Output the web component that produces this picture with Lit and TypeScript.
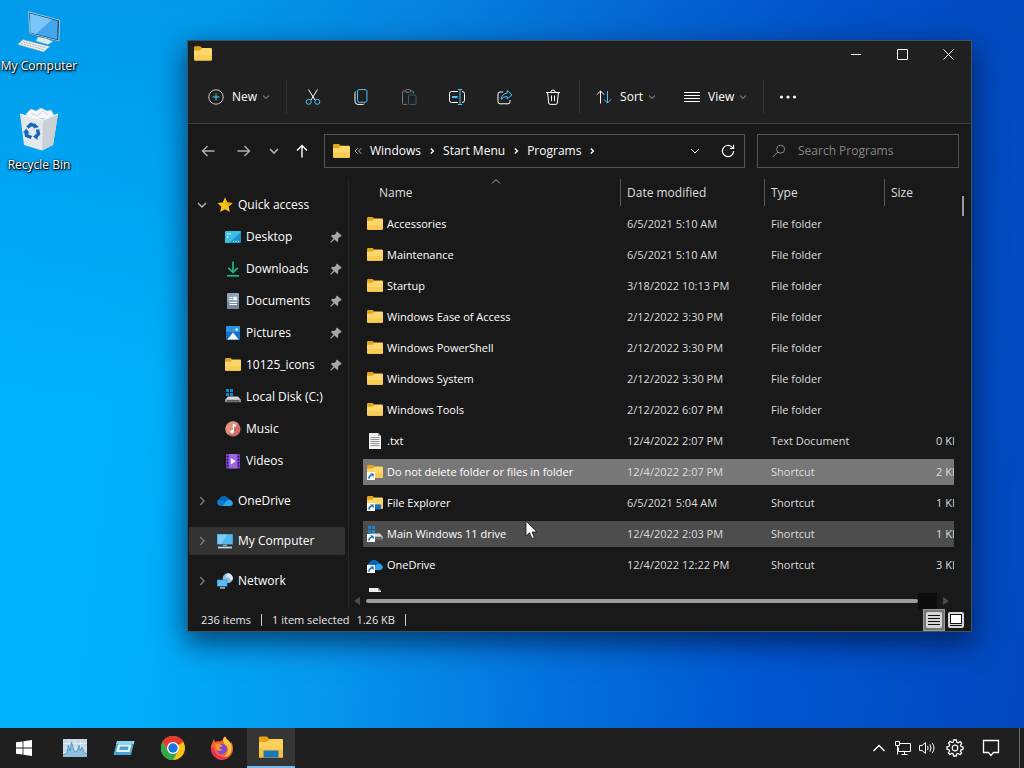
import { LitElement, html, svg, css, nothing } from "lit";
import { customElement, state } from "lit/decorators.js";
import { classMap } from "lit/directives/class-map.js";

type Row = { icon: string; name: string; date: string; type: string; size?: string };
type Place = { icon: string; name: string; pinned?: boolean };

const ROWS: Row[] = [
  { icon: "folder", name: "Accessories", date: "6/5/2021 5:10 AM", type: "File folder" },
  { icon: "folder", name: "Maintenance", date: "6/5/2021 5:10 AM", type: "File folder" },
  { icon: "folder", name: "Startup", date: "3/18/2022 10:13 PM", type: "File folder" },
  { icon: "folder", name: "Windows Ease of Access", date: "2/12/2022 3:30 PM", type: "File folder" },
  { icon: "folder", name: "Windows PowerShell", date: "2/12/2022 3:30 PM", type: "File folder" },
  { icon: "folder", name: "Windows System", date: "2/12/2022 3:30 PM", type: "File folder" },
  { icon: "folder", name: "Windows Tools", date: "2/12/2022 6:07 PM", type: "File folder" },
  { icon: "textFile", name: ".txt", date: "12/4/2022 2:07 PM", type: "Text Document", size: "0 KB" },
  { icon: "folderLink", name: "Do not delete folder or files in folder", date: "12/4/2022 2:07 PM", type: "Shortcut", size: "2 KB" },
  { icon: "explorerLink", name: "File Explorer", date: "6/5/2021 5:04 AM", type: "Shortcut", size: "1 KB" },
  { icon: "driveLink", name: "Main Windows 11 drive", date: "12/4/2022 2:03 PM", type: "Shortcut", size: "1 KB" },
  { icon: "cloudLink", name: "OneDrive", date: "12/4/2022 12:22 PM", type: "Shortcut", size: "3 KB" },
  { icon: "textFile", name: "", date: "", type: "" },
];
const SELECTED = 8;
const HOVERED = 10;

const QUICK: Place[] = [
  { icon: "desktop", name: "Desktop", pinned: true },
  { icon: "download", name: "Downloads", pinned: true },
  { icon: "document", name: "Documents", pinned: true },
  { icon: "picture", name: "Pictures", pinned: true },
  { icon: "folder", name: "10125_icons", pinned: true },
  { icon: "drive", name: "Local Disk (C:)" },
  { icon: "music", name: "Music" },
  { icon: "video", name: "Videos" },
];

const folder = svg`<path d="M0 2.200Q0 1 1.200 1H5.600L7.200 2.600V6H0z" fill="#e3a51a"/><path d="M0 4.800H5.400L7.400 2.600H14.800Q16 2.600 16 3.800V12.600Q16 13.800 14.800 13.800H1.200Q0 13.800 0 12.600z" fill="#fdd76b"/><path d="M0 9H16V12.600Q16 13.800 14.800 13.800H1.200Q0 13.800 0 12.600z" fill="#f8cc55"/>`;
const cloud = svg`<path d="M3.6 12.6A3.5 3.5 0 0 1 2 6.4 5 5 0 0 1 10.6 4.6 4 4 0 0 1 13 7z" fill="#0a64b8"/><path d="M5 13 3.4 12.8A3.5 3.5 0 0 1 1.8 6.4L8.4 9.6 13 13z" fill="#0f7fd6"/><path d="M6 13 9 8.2A3.8 3.8 0 0 1 15.3 8.8 2.6 2.6 0 0 1 13.2 13z" fill="#28a8ea"/>`;
const drive = svg`<path d="M1 0h3v3H1zM5 0h3v3H5zM1 4h3v3H1zM5 4h3v3H5z" fill="#1387cf"/><path d="M3 7.6H13L16 11H0z" fill="#d8d8d8"/><path d="M0 10.600H16V13.200H0z" fill="#8d9398"/><path d="M2 11.400h12v1H2z" fill="#35393c"/>`;
const arrowBadge = svg`<path d="M0 8H8V16H0z" fill="#fff"/><path d="M1.800 14.600Q1.900 12 4.600 11.200" fill="none" stroke="#1769b5" stroke-width="1.400"/><path d="M3 9.500H6.600V13.200z" fill="#1769b5"/>`;

const ICONS: Record<string, unknown> = {
  folder,
  cloud,
  drive,
  folderLink: svg`${folder}${arrowBadge}`,
  explorerLink: svg`${folder}<path d="M7.400 9.400H14V14.400H7.400z" fill="#1673c4"/>${arrowBadge}`,
  driveLink: svg`${drive}${arrowBadge}`,
  cloudLink: svg`${cloud}${arrowBadge}`,
  textFile: svg`<path d="M2 0H11L14 3V16H2z" fill="#f0f0f0"/><path d="M11 0V3H14z" fill="#999"/><path d="M3.500 4.500h9M3.500 6.500h9M3.500 8.500h9M3.500 10.500h9M3.500 12.500h9" stroke="#8a8a8a" stroke-width=".9"/>`,
  star: svg`<path d="M8 .6 10.3 5.4 15.6 6 11.7 9.6 12.8 15 8 12.3 3.2 15 4.3 9.6 .4 6 5.7 5.4z" fill="#fcc419"/><path d="M8 .6 10.3 5.4 15.6 6 11.7 9.6 8 7z" fill="#f2ae0a"/>`,
  desktop: svg`<rect y="2" width="16" height="12" rx="1" fill="#1795cf"/><path d="M0 3q0-1 1-1h14q1 0 1 1L4 14H1q-1 0-1-1z" fill="#38bfe3"/><path d="M2 4h1.4v1.4H2zM2 7h1.4v1.4H2zM4.6 4H6v1.4H4.6z" fill="#e8fbff"/><path d="M8 12.4h1.2M10.4 12.4h1.2M12.8 12.4H14" stroke="#d6f6ff"/>`,
  download: svg`<path d="M8 .6V11M3.2 6.8 8 11.4 12.8 6.8" fill="none" stroke="#25b487" stroke-width="1.7"/><path d="M2 14.8H14" stroke="#25b487" stroke-width="1.7"/>`,
  document: svg`<rect x="2" width="12" height="16" rx="1" fill="#8ea2b8"/><path d="M2 9H14V15q0 1-1 1H3q-1 0-1-1z" fill="#74899f"/><path d="M4.4 4.5h3M4.4 6.5h3M4.4 9.5h7.4M4.4 11.5h7.4" stroke="#fff"/><path d="M8.4 3.8h3.4v3.4H8.4z" fill="#fff"/>`,
  picture: svg`<rect x="1" y="1" width="14" height="14" rx="1" fill="#1572c2"/><path d="M1 2q0-1 1-1h12q1 0 1 1v5H1z" fill="#2a94dc"/><path d="M2.4 14.4 8 7.6 13.6 14.4z" fill="#f5fbff"/><circle cx="11.6" cy="4.6" r="1.3" fill="#e6f6ff"/>`,
  music: svg`<circle cx="8" cy="8" r="7.6" fill="#cf6a6c"/><path d="M.4 8a7.6 7.6 0 0 1 13-5.4L2.6 13.4A7.6 7.6 0 0 1 .4 8z" fill="#e2917b"/><path d="M8.4 3V10.6" stroke="#fff" stroke-width="1.2"/><path d="M8 2.6 11 4.2V6L8 4.8z" fill="#fff"/><circle cx="7" cy="10.8" r="1.9" fill="#fff"/>`,
  video: svg`<rect x="1" y="1" width="14" height="14.4" rx="1" fill="#7a3fc4"/><path d="M4 1h8v14.4H4z" fill="#9a68dc"/><path d="M1.8 3h1.4v1.4H1.8zM1.8 6h1.4v1.4H1.8zM1.8 9h1.4v1.4H1.8zM1.8 12h1.4v1.4H1.8zM12.8 3h1.4v1.4h-1.4zM12.8 6h1.4v1.4h-1.4zM12.8 9h1.4v1.4h-1.4zM12.8 12h1.4v1.4h-1.4z" fill="#2f1560"/><path d="M5.8 5 11 8.2 5.8 11.4z" fill="#f4ecff"/>`,
  computer: svg`<path d="M0 1h16v10.6H0z" fill="#2f8fd0"/><path d="M.6 1.6h14.8v9.4H.6z" fill="#56b6ee"/><path d="M.6 1.6h10L4 11H.6z" fill="#79cdf7"/><path d="M6 11.6h4v1.4H6z" fill="#9aa"/><path d="M1 13.6H15V15.4H1z" fill="#c8d2da"/>`,
  network: svg`<circle cx="10.8" cy="5.2" r="5" fill="#8fc3dd"/><path d="M10.6.3a5 5 0 0 1 5 6.4q-2.6.8-3-1.4T9 4.400Z" fill="#dcecf2"/><path d="M0 6.600h10.400v7H0z" fill="#2a86c8"/><path d="M.6 7.200h9.200v5.800H.6z" fill="#5dbdf2"/><path d="M3 14.200h5V15.600H3z" fill="#bcd"/>`,
};

const icon = (name: string) => html`<svg class="icon" viewBox="0 0 16 16" aria-hidden="true">${ICONS[name]}</svg>`;

const glyph = (size: number, body: unknown, cls = "") =>
  html`<svg class="glyph ${cls}" width=${size} height=${size} viewBox="0 0 ${size} ${size}" aria-hidden="true">${body}</svg>`;

const chevronDown = (cls = "") => glyph(8, svg`<path d="M1 2.600 4 5.400 7 2.600"/>`, cls);
const chevronWide = (cls = "") => glyph(10, svg`<path d="M1 3 5 7 9 3"/>`, cls);
const chevronRight = (cls = "") => glyph(10, svg`<path d="M3.200 1 7 5 3.200 9"/>`, cls);
const crumbArrow = () => glyph(8, svg`<path d="M2.800 1.600 5.400 4 2.800 6.400"/>`, "crumb-arrow");

@customElement("app-root")
export class AppRoot extends LitElement {
  @state() private selected = SELECTED;
  @state() private query = "";

  static styles = css`
    :host {
      display: block;
      height: 100vh;
      font: 12px/18px "Open Sans", "Noto Sans", sans-serif;
      color: #fff;
    }
    * { box-sizing: border-box; }
    button, input { font: inherit; color: inherit; background: none; border: 0; margin: 0; padding: 0; }
    button { display: flex; align-items: center; justify-content: center; }
    a { color: inherit; text-decoration: none; }
    ul { list-style: none; margin: 0; padding: 0; }
    .icon { width: 16px; height: 16px; flex: none; display: block; }
    .glyph { flex: none; display: block; fill: none; stroke: currentColor; stroke-width: 1; }
    .blue { stroke: #4cc2ff; }
    .muted { color: #b0b0b0; }

    .screen { height: 100%; display: flex; flex-direction: column; }
    .desktop {
      position: relative;
      flex: 1;
      min-height: 0;
      overflow: hidden;
      background:
        linear-gradient(180deg, rgba(8, 60, 170, 0.2), rgba(8, 60, 170, 0) 55%),
        linear-gradient(97deg, #00b2fc 0%, #00b0fa 18%, #0698ee 36%, #0470dc 58%, #0056d0 76%, #0347bd 100%);
    }
    .shortcuts { display: flex; flex-direction: column; gap: 32px; width: 78px; padding-top: 8px; }
    .shortcut { display: flex; flex-direction: column; align-items: center; gap: 3px; white-space: nowrap; text-shadow: 1px 1px 1px #000, 0 1px 3px #000, 0 0 2px rgba(0, 0, 0, 0.7); }
    .shortcut svg { width: 46px; height: 46px; }

    .window {
      position: absolute;
      inset: 40px 52px 96px 187px;
      display: flex;
      flex-direction: column;
      background: #191919;
      border: 1px solid #3a5566;
      box-shadow: 0 10px 26px 2px rgba(0, 10, 40, 0.6);
    }
    .titlebar { display: flex; align-items: center; height: 26px; padding-left: 6px; background: #202020; flex: none; }
    .titlebar .icon { width: 18px; height: 18px; margin-right: auto; }
    .titlebar button { width: 46px; height: 26px; }
    .toolbar { display: flex; align-items: center; height: 57px; padding: 4px 0 0 12px; background: #202020; border-bottom: 1px solid #3c3c3c; flex: none; font-weight: 500; }
    .menu { height: 32px; gap: 8px; padding: 0 8px; }
    .menu .glyph:last-child { color: #a8a8a8; margin-left: -3px; }
    .view { margin-left: 12px; }
    .tools { display: flex; padding: 0 2px; margin-left: 8px; margin-right: 8px; border: solid #333; border-width: 0 1px; height: 34px; align-items: center; }
    .tools button { width: 48px; height: 32px; }
    .tools .off { opacity: 0.4; }
    .more { width: 49px; height: 34px; margin-left: 8px; border-left: 1px solid #333; }

    .navbar { display: flex; align-items: center; height: 55px; padding: 0 12px 1px 2px; flex: none; }
    .navbar > button { width: 36px; height: 32px; }
    .navbar > .recent { width: 24px; }
    .navbar > .up { width: 32px; margin-right: 6px; }
    .address { flex: 1; height: 34px; display: flex; align-items: center; padding: 0 0 0 8px; border: 1px solid #555; }
    .address .icon { width: 17px; height: 17px; }
    .address .root { width: 16px; margin-right: 4px; }
    .crumbs { display: flex; align-items: center; flex: 1; gap: 7px; font-size: 12px; }
    .crumb-arrow { stroke-width: 1.4; }
    .crumbs a { display: block; }
    .address button { width: 33px; height: 30px; }
    .search { width: 202px; height: 34px; margin-left: 12px; display: flex; align-items: center; gap: 12px; padding: 0 12px 0 14px; border: 1px solid #555; color: #888; }
    .search input { flex: 1; min-width: 0; outline: 0; }
    .search input::placeholder { color: #858585; opacity: 1; }

    .body { flex: 1; min-height: 0; display: flex; }
    .sidebar { width: 161px; flex: none; padding: 12px 3px 0 1px; border-right: 1px solid #262626; display: flex; flex-direction: column; gap: 12px; }
    .sidebar ul { display: flex; flex-direction: column; gap: 4px; }
    .place { display: flex; align-items: center; height: 28px; padding: 0 3px 0 8px; white-space: nowrap; }
    .place .icon { margin: 0 5px 0 10px; }
    .sub { padding-left: 26px; }
    .place .pin { margin-left: auto; color: #a6a6a6; fill: #a6a6a6; }
    .place > .glyph { stroke-width: 1.5; }
    .closed { color: #777; }
    .current { background: #333; border-radius: 2px; }

    .main { flex: 1; min-width: 0; display: flex; flex-direction: column; padding-left: 14px; }
    .list-row { flex: 1; min-height: 0; display: flex; }
    .list { flex: 1; min-width: 0; overflow: hidden; }
    table { width: calc(100% + 11px); table-layout: fixed; border-collapse: separate; border-spacing: 0 5px; margin-top: -5px; }
    .col-date { width: 144px; }
    .col-type { width: 120px; }
    .col-size { width: 81px; }
    th, td { height: 26px; padding: 0 0 0 7px; text-align: left; font-weight: 400; white-space: nowrap; }
    th { height: 27px; color: #dedede; border-left: 1px solid #5a5a5a; padding-left: 6px; }
    th:first-child { border: 0; padding-left: 16px; }
    .name-head { position: relative; }
    .name-head .glyph { position: absolute; top: -7px; left: 112px; color: #aaa; }
    td { color: #dcdcdc; font-size: 11px; }
    td:first-child { padding-left: 4px; color: #fff; }
    td:last-child { text-align: right; padding-right: 6px; }
    .file { display: flex; align-items: center; gap: 4px; }
    tr.selected td { background: #777; }
    tr.hovered td { background: #4d4d4d; }
    .vscroll { width: 17px; padding: 17px 7px 0 8px; flex: none; }
    .vthumb { height: 20px; background: #9a9a9a; }
    .hscroll { height: 17px; display: flex; align-items: center; flex: none; padding-right: 21px; margin-left: -10px; }
    .hthumb { flex: 1; height: 4px; background: #9c9c9c; margin-left: 5px; border-radius: 2px; }
    .hgap { width: 19px; height: 16px; background: #0c0c0c; margin-right: 5px; }
    .hscroll .glyph { fill: #4c4c4c; stroke: none; }

    .status { display: flex; align-items: center; height: 22px; padding-left: 13px; flex: none; color: #e6e6e6; font-size: 11px; }
    .status span + span { border-left: 1px solid #ccc; line-height: 12px; }
    .status .count { padding-right: 10px; }
    .status .picked { padding: 0 10px; border-right: 1px solid #ccc; }
    .status .picked i { font-style: normal; margin-left: 4px; }
    .status .details { margin-left: auto; width: 22px; height: 22px; background: #777; border: 1px solid #999; }
    .status .large { width: 22px; height: 22px; margin-right: 4px; }

    .pointer { position: absolute; left: 525px; top: 520px; }

    .taskbar { height: 40px; flex: none; display: flex; background: #1f1f1f; }
    .taskbar .apps { display: flex; gap: 1px; flex: 1; }
    .taskbar .apps button { width: 48px; height: 40px; }
    .taskbar .apps .start { margin-right: 2px; }
    .taskbar .apps .running { background: #353535; border-bottom: 2px solid #76b9ed; }
    .tray { display: flex; }
    .tray button { width: 24px; height: 40px; }
    .tray .gear { width: 32px; }
    .tray .notes { width: 40px; margin-right: 8px; }
    .tray .peek { width: 5px; border-left: 1px solid #6a6a6a; }
  `;

  render() {
    return html`
      <div class="screen">
        <main class="desktop">
          ${this.shortcuts()}
          <section class="window" aria-label="Programs">
            ${this.titlebar()} ${this.toolbar()} ${this.navbar()}
            <div class="body">${this.sidebar()} ${this.files()}</div>
            ${this.status()}
          </section>
          <svg class="pointer" width="13" height="20" viewBox="0 0 13 20" aria-hidden="true">
            <path d="M1 1V16L4.500 12.800 7 18.600 9.400 17.600 7 12H11.800z" fill="#fff" stroke="#111" stroke-width=".8" />
          </svg>
        </main>
        ${this.taskbar()}
      </div>
    `;
  }

  private shortcuts() {
    return html`
      <nav class="shortcuts" aria-label="Desktop">
        <a class="shortcut" href="#computer">
          <svg viewBox="0 0 46 46" aria-hidden="true">
            <path d="M13 4 43.500 12 42.500 33.500 13.500 26z" fill="#17445f" />
            <path d="M12.600 3.800 43.500 12.200 42.800 33 13.800 25.400z" fill="none" stroke="#c8dfe9" stroke-width=".8" />
            <path d="M14 5.400 41.800 13 41.200 31.500 14.500 24.500z" fill="#42a5ee" />
            <path d="M14 5.400 36 11.400 20 26 14.500 24.500z" fill="#7cc5f8" />
            <path d="M22 29 30 30.500 37 33.500 32 36.500 20 33z" fill="#dce7ec" />
            <path d="M7 31.500 34 38.500 27.500 44 1.500 36.500z" fill="#e9eef0" stroke="#8296a2" stroke-width=".6" />
            <path d="M7 33.800 30.500 40M5 35.500 28.500 41.800" stroke="#a0adb4" stroke-width=".9" stroke-dasharray="2 1" />
          </svg>
          <span>My Computer</span>
        </a>
        <a class="shortcut" href="#recycle">
          <svg viewBox="0 0 46 46" aria-hidden="true">
            <path d="M10 7 15 2 20 4 25 1 31 4 35 3 38 8 30 12 14 11z" fill="#f6f9fb" stroke="#b7c4cc" stroke-width=".6" />
            <path d="M4 7 27 13 42 7 37 38 26 43.500 8 38z" fill="#e3e8eb" />
            <path d="M27 13 42 7 37 38 26 43.500z" fill="#c9d1d6" />
            <path d="M4 7 27 13 42 7" fill="none" stroke="#fff" stroke-width="1" />
            <path d="M15 6 21 9 27 4 32 8" fill="none" stroke="#b9c6ce" stroke-width=".8" />
            <g fill="none" stroke="#1268bd" stroke-width="3.400">
              <path d="M11.500 20.500 15 17.500 19.500 19" />
              <path d="M21.500 22.500 22.500 27 20 29.500" />
              <path d="M15.500 30.500 10.500 28.500 10 24.500" />
            </g>
            <path d="M18 16 23 20 17.500 21.500zM21.500 26.500V33L17 29.500zM7 25.500 10.500 21.500 13.500 26.500z" fill="#1268bd" />
          </svg>
          <span>Recycle Bin</span>
        </a>
      </nav>
    `;
  }

  private titlebar() {
    return html`
      <header class="titlebar">
        ${icon("folder")}
        <button aria-label="Minimize">${glyph(10, svg`<path d="M0 5.500H10"/>`)}</button>
        <button aria-label="Maximize">${glyph(11, svg`<rect x=".5" y=".5" width="10" height="10" rx=".5"/>`)}</button>
        <button aria-label="Close">${glyph(11, svg`<path d="M.5.5 10.500 10.500M10.500.5.5 10.500"/>`)}</button>
      </header>
    `;
  }

  private toolbar() {
    return html`
      <div class="toolbar" role="toolbar" aria-label="Commands">
        <button class="menu">
          ${glyph(16, svg`<circle cx="8" cy="8" r="7.200" stroke="#c9c9c9"/><path class="blue" d="M8 4.500V11.500M4.500 8H11.500"/>`)}
          New ${chevronDown()}
        </button>
        <div class="tools">
          <button aria-label="Cut">
            ${glyph(16, svg`<path d="M3.500.500 10 11M12.500.500 6 11"/><g class="blue"><circle cx="3.700" cy="12.800" r="2.500"/><circle cx="12.300" cy="12.800" r="2.500"/></g>`)}
          </button>
          <button aria-label="Copy">
            ${glyph(16, svg`<rect class="blue" x="4.500" y=".6" width="9.400" height="12.600" rx="1.600"/><path d="M2.600 2.600Q2 3 2 4.200V12.500Q2 15.400 5 15.400H9.800Q11 15.400 11.400 14.800"/>`)}
          </button>
          <button class="off" aria-label="Paste" disabled>
            ${glyph(16, svg`<path d="M6 15.400H2.500Q1.500 15.400 1.500 14.400V3Q1.500 2 2.500 2H4.500M9.500 2H11.500Q12.500 2 12.500 3V4.500"/><rect x="4.500" y=".6" width="5" height="2.800" rx="1.200"/><rect class="blue" x="7.500" y="6" width="7.500" height="9.400" rx="1"/>`)}
          </button>
          <button aria-label="Rename">
            ${glyph(16, svg`<path d="M9 2.500H2.500Q.500 2.500.500 4.500V11.500Q.500 13.500 2.500 13.500H9M13 2.500Q15.500 2.500 15.500 4.500V11.500Q15.500 13.500 13 13.500"/><path class="blue" d="M11 .5V15.500M8.800.5H13.200M8.800 15.500H13.200"/><path class="blue" stroke-width="2" d="M3 8H8.600"/>`)}
          </button>
          <button aria-label="Share">
            ${glyph(16, svg`<path d="M6 3H3Q1 3 1 5V12.800Q1 14.800 3 14.800H11Q13 14.800 13 12.800V11"/><path class="blue" d="M10.200 1.500 15 5.800 10.200 10V7.600Q6.500 7.200 4.200 10.400 4.800 4.800 10.200 4z"/>`)}
          </button>
          <button aria-label="Delete">
            ${glyph(16, svg`<path d="M1 3.500H15M5.800 3.500Q5.800 1 8 1T10.200 3.500M2.600 3.500 3.700 14Q3.900 15.400 5.200 15.400H10.800Q12.100 15.400 12.300 14L13.400 3.500M6.500 6.500V12M9.500 6.500V12"/>`)}
          </button>
        </div>
        <button class="menu">
          ${glyph(16, svg`<path d="M4.500 14.500V2M.8 5.700 4.500 2 8.200 5.700"/><path class="blue" d="M11.500 2V14M7.800 10.300 11.500 14 15.200 10.300"/>`)}
          Sort ${chevronDown()}
        </button>
        <button class="menu view">
          ${glyph(16, svg`<path d="M0 3.500H16M0 6.500H16M0 9.500H16M0 12.500H16"/>`)}
          View ${chevronDown()}
        </button>
        <button class="more" aria-label="See more">
          ${glyph(18, svg`<g fill="currentColor" stroke="none"><circle cx="2.500" cy="9" r="1.600"/><circle cx="9" cy="9" r="1.600"/><circle cx="15.500" cy="9" r="1.600"/></g>`)}
        </button>
      </div>
    `;
  }

  private navbar() {
    return html`
      <div class="navbar">
        <button class="muted" aria-label="Back">${glyph(14, svg`<path stroke-width="1.400" d="M13.500 7H1.500M6.500 2 1.500 7 6.500 12"/>`)}</button>
        <button class="muted" aria-label="Forward">${glyph(14, svg`<path stroke-width="1.400" d="M.5 7H12.500M7.500 2 12.500 7 7.500 12"/>`)}</button>
        <button class="muted recent" aria-label="Recent locations">${glyph(10, svg`<path stroke-width="1.600" d="M1 3 5 7 9 3"/>`)}</button>
        <button class="up" aria-label="Up">${glyph(14, svg`<path stroke-width="1.400" d="M7 13.500V1.500M2 6.500 7 1.500 12 6.500"/>`)}</button>
        <div class="address">
          ${icon("folder")}
          <button class="root muted" aria-label="Parent folders">${glyph(8, svg`<path d="M3.800 1.200 1 4 3.800 6.800M7.400 1.200 4.600 4 7.400 6.800"/>`)}</button>
          <nav class="crumbs" aria-label="Address">
            <a href="#windows">Windows</a>${crumbArrow()}
            <a href="#start-menu">Start Menu</a>${crumbArrow()}
            <a href="#programs">Programs</a>${crumbArrow()}
          </nav>
          <button aria-label="Previous locations">${chevronWide()}</button>
          <button aria-label="Refresh">${glyph(14, svg`<path stroke-width="1.200" d="M12.600 7A5.600 5.600 0 1 1 10.800 2.900L12.300 4.300M12.600 .8V4.500H8.900"/>`)}</button>
        </div>
        <label class="search">
          ${glyph(14, svg`<circle cx="8.600" cy="5.200" r="4"/><path d="M5.800 8 .8 13"/>`)}
          <input
            type="text"
            aria-label="Search Programs"
            placeholder="Search Programs"
            .value=${this.query}
            @input=${(e: Event) => (this.query = (e.target as HTMLInputElement).value)}
          />
        </label>
      </div>
    `;
  }

  private place(p: Place, cls: string, chevron: unknown = nothing) {
    return html`
      <a class="place ${cls}" href="#${p.name}">
        ${chevron}${icon(p.icon)}<span>${p.name}</span>
        ${p.pinned
          ? glyph(12, svg`<path stroke="none" d="M7.200.400 11.600 4.800 10.500 5.900 9.900 5.700 8.100 7.500 8.200 9.900 7.100 11 4.600 8.500 1.200 11.500.3 11.700.5 10.800 3.500 7.400 1 4.900 2.100 3.800 4.500 3.900 6.300 2.100 6.100 1.500z"/>`, "pin")
          : nothing}
      </a>
    `;
  }

  private sidebar() {
    return html`
      <nav class="sidebar" aria-label="Places">
        <ul>
          <li>${this.place({ icon: "star", name: "Quick access" }, "", chevronWide("muted"))}</li>
          ${QUICK.map((p) => html`<li>${this.place(p, "sub")}</li>`)}
        </ul>
        ${this.place({ icon: "cloud", name: "OneDrive" }, "", chevronRight("closed"))}
        ${this.place({ icon: "computer", name: "My Computer" }, "current", chevronRight("closed"))}
        ${this.place({ icon: "network", name: "Network" }, "", chevronRight("closed"))}
      </nav>
    `;
  }

  private files() {
    return html`
      <div class="main">
        <div class="list-row">
          <div class="list">
            <table>
              <colgroup>
                <col />
                <col class="col-date" />
                <col class="col-type" />
                <col class="col-size" />
              </colgroup>
              <thead>
                <tr>
                  <th scope="col">
                    <div class="name-head">Name ${glyph(10, svg`<path d="M1 6.500 5 2.500 9 6.500"/>`)}</div>
                  </th>
                  <th scope="col">Date modified</th>
                  <th scope="col">Type</th>
                  <th scope="col">Size</th>
                </tr>
              </thead>
              <tbody>
                ${ROWS.map(
                  (r, i) => html`
                    <tr class=${classMap({ selected: i === this.selected, hovered: i === HOVERED })} @click=${() => (this.selected = i)}>
                      <td><div class="file">${icon(r.icon)}<span>${r.name}</span></div></td>
                      <td>${r.date}</td>
                      <td>${r.type}</td>
                      <td>${r.size ?? nothing}</td>
                    </tr>
                  `
                )}
              </tbody>
            </table>
          </div>
          <div class="vscroll"><div class="vthumb"></div></div>
        </div>
        <div class="hscroll">
          ${glyph(8, svg`<path d="M7 0V8L1 4z"/>`)}
          <div class="hthumb"></div>
          <div class="hgap"></div>
          ${glyph(8, svg`<path d="M1 0V8L7 4z"/>`)}
        </div>
      </div>
    `;
  }

  private status() {
    return html`
      <footer class="status">
        <span class="count">236 items</span>
        <span class="picked">1 item selected <i>1.26 KB</i></span>
        <button class="details" aria-label="Details view">
          ${glyph(16, svg`<rect width="16" height="16" rx="2" fill="#d6d6d6" stroke="none"/><path stroke="#111" d="M2 3.500H14M2 6.500H14M2 9.500H14M2 12.500H14"/>`)}
        </button>
        <button class="large" aria-label="Large icons view">
          ${glyph(16, svg`<rect width="16" height="16" rx="2" fill="#d6d6d6" stroke="none"/><rect x="2.500" y="2.500" width="11" height="9" fill="#fff" stroke="#111"/><path stroke="#111" d="M2 13.500H14"/>`)}
        </button>
      </footer>
    `;
  }

  private taskbar() {
    return html`
      <footer class="taskbar">
        <div class="apps">
          <button class="start" aria-label="Start">
            ${glyph(16, svg`<path fill="#fff" stroke="none" d="M0 2.300 6.600 1.400V7.600H0zM7.400 1.300 16 0V7.600H7.400zM0 8.400H6.600V14.600L0 13.700zM7.400 8.400H16V16L7.400 14.700z"/>`)}
          </button>
          <button aria-label="Performance monitor">
            <svg width="24" height="18" viewBox="0 0 24 18" aria-hidden="true">
              <rect width="24" height="18" fill="#c3d8e4" />
              <path d="M0 4.500H24M0 9H24M0 13.500H24M6 0V18M12 0V18M18 0V18" stroke="#e6f0f5" stroke-width=".8" />
              <path d="M0 16 4 14 5.500 6 7 12 8.500 3.500 10.500 10 12 13 14.500 12 16 6.500 17.500 12 19 8 21 13 24 15V18H0z" fill="#8fbfdd" />
              <path d="M0 16 4 14 5.500 6 7 12 8.500 3.500 10.500 10 12 13 14.500 12 16 6.500 17.500 12 19 8 21 13 24 15" fill="none" stroke="#3d8fc4" stroke-width=".8" />
            </svg>
          </button>
          <button aria-label="Run">
            <svg width="22" height="16" viewBox="0 0 22 16" aria-hidden="true">
              <path d="M4 1H21.500L18 15H.5z" fill="#4ba4d0" />
              <path d="M4 1H21.500L20.800 4H3.200z" fill="#8fd0ec" />
              <path d="M5 4.500H18.500L16.600 12H3.100z" fill="#e4f6fc" />
              <path d="M7 6.500H15.600L14.800 10H6.200z" fill="#4a9fd0" />
            </svg>
          </button>
          <button aria-label="Chrome">
            <svg width="24" height="24" viewBox="0 0 24 24" aria-hidden="true">
              <circle cx="12" cy="12" r="12" fill="#fbc116" />
              <path d="M12 12 1.600 6A12 12 0 0 1 22.400 6z" fill="#e33b2e" />
              <path d="M12 6H22.400A12 12 0 0 0 1.600 6L6.800 15z" fill="#e33b2e" />
              <path d="M1.600 6A12 12 0 0 0 12 24L17.200 15 6.800 15z" fill="#2da94f" />
              <circle cx="12" cy="12" r="6" fill="#fff" />
              <circle cx="12" cy="12" r="4.700" fill="#1b73e8" />
            </svg>
          </button>
          <button aria-label="Firefox">
            <svg width="24" height="24" viewBox="0 0 24 24" aria-hidden="true">
              <path d="M2.600 6Q3 4 4.400 3.200 4.200 5 5.200 6 7.500 4.600 10 5.500L13 4Q13 2 15 .6 16 3 19 5 20 6 20.300 7.500L21.400 6Q24 11 22.500 16A11 11 0 0 1 1 13.500Q.6 9.500 2.600 6z" fill="#f9652c" />
              <path d="M13 4Q13 2 15 .6 16 3 19 5 22.500 8.500 21.500 14 20 20 14 21 20 16 17 10 13.500 8 13 4z" fill="#ffc83d" />
              <path d="M1.200 12A11 11 0 0 0 20 20Q15 22.500 9.500 20 4.500 18 4 11.500z" fill="#ee2e59" />
              <circle cx="11.600" cy="13" r="5.200" fill="#7a4bd8" />
              <path d="M5.200 8.500Q8 7 10.500 8.500L12.500 9.500Q12 11 9.500 11 9.500 13.500 12.500 13.500 9 16.500 6.200 13.500z" fill="#ff9326" />
            </svg>
          </button>
          <button class="running" aria-label="File Explorer">
            <svg width="26" height="22" viewBox="0 0 26 22" aria-hidden="true">
              <path d="M1 1.500Q1 .5 2 .5H9L11 3V8H1z" fill="#e8a317" />
              <path d="M1 6H9L11.500 3H24Q25 3 25 4V21.500H1z" fill="#fdd05a" />
              <path d="M1 13H25V21.500H1z" fill="#f8c142" />
              <path d="M5.500 21.500V15.500Q5.500 14.500 6.500 14.500H19.500Q20.500 14.500 20.500 15.500V21.500z" fill="#1976b8" />
            </svg>
          </button>
        </div>
        <div class="tray">
          <button aria-label="Show hidden icons">${glyph(12, svg`<path stroke-width="1.300" d="M.5 9 6 3.500 11.500 9"/>`)}</button>
          <button aria-label="Network">
            ${glyph(16, svg`<path d="M5 3.500H15.500V11.500H3.500V7.500M9.500 11.500V14.500M6.500 14.500H12.500M.5 1.500H4.500V5.500H.5zM2.500 5.500V14.500"/>`)}
          </button>
          <button aria-label="Volume">
            ${glyph(16, svg`<path d="M.5 5.500H3L6.500 2.500V13.500L3 10.500H.5zM8.500 6Q9.800 8 8.500 10M10.800 4.300Q13.300 8 10.800 11.700M13 2.800Q17 8 13 13.200"/>`)}
          </button>
          <button class="gear" aria-label="Settings">
            ${glyph(18, svg`<circle cx="9" cy="9" r="2.800" stroke-width="1.200"/><path stroke-width="1.300" d="M7.700 1H10.300L10.800 3.200 12.200 3.800 14.200 2.600 15.700 4.300 14.500 6.200 15 7.500 17 8V10.300L15 10.800 14.400 12.200 15.600 14 14 15.600 12 14.400 10.700 15 10.300 17H7.700L7.200 14.900 5.900 14.300 4 15.500 2.400 13.900 3.600 12 3 10.700 1 10.200V7.800L3.100 7.300 3.700 5.900 2.500 4 4.100 2.400 6 3.600 7.300 3.100z"/>`)}
          </button>
          <button class="notes" aria-label="Notifications">
            ${glyph(18, svg`<path stroke-width="1.300" d="M1.500 1.500H16.500V13.500H11.500L9 16.500 6.500 13.500H1.500z"/>`)}
          </button>
          <button class="peek" aria-label="Show desktop"></button>
        </div>
      </footer>
    `;
  }
}
